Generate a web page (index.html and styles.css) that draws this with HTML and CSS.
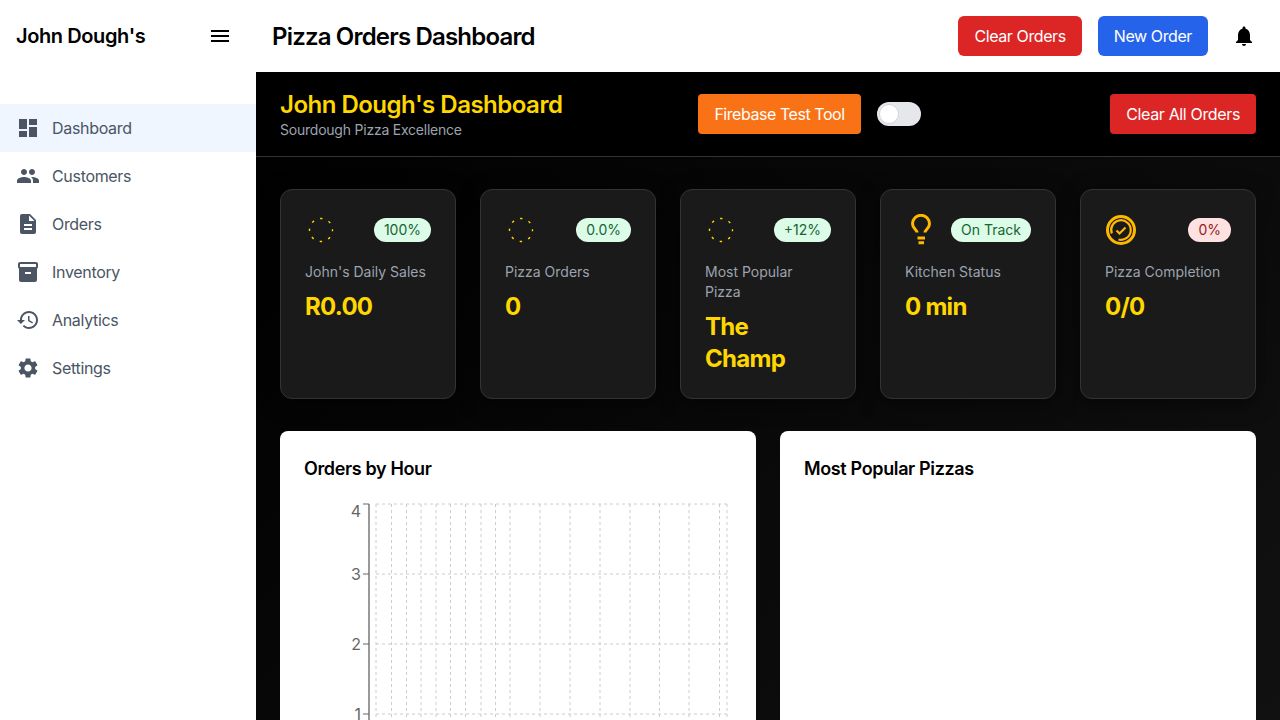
FILE: index.html
```html
<!DOCTYPE html>
<html lang="en">
<head>
    <meta charset="UTF-8">
    <meta name="viewport" content="width=device-width, initial-scale=1.0">
    <title>Pizza Orders Dashboard</title>
    <link rel="stylesheet" href="styles.css">
</head>
<body>
    <aside class="sidebar">
        <div class="brand">
            <span class="brand-name">John Dough's</span>
            <svg class="icon icon-black" viewBox="0 0 24 24"><path d="M3 18h18v-2H3v2zm0-5h18v-2H3v2zm0-7v2h18V6H3z"/></svg>
        </div>
        <nav class="nav">
            <a class="nav-item active">
                <svg class="icon" viewBox="0 0 24 24"><path d="M3 13h8V3H3v10zm0 8h8v-6H3v6zm10 0h8V11h-8v10zm0-18v6h8V3h-8z"/></svg>
                Dashboard
            </a>
            <a class="nav-item">
                <svg class="icon" viewBox="0 0 24 24"><path d="M16 11c1.66 0 2.99-1.34 2.99-3S17.66 5 16 5c-1.66 0-3 1.34-3 3s1.34 3 3 3zm-8 0c1.66 0 2.99-1.34 2.99-3S9.66 5 8 5C6.34 5 5 6.34 5 8s1.34 3 3 3zm0 2c-2.33 0-7 1.17-7 3.5V19h14v-2.5c0-2.33-4.67-3.5-7-3.5zm8 0c-.29 0-.62.02-.97.05 1.16.84 1.97 1.97 1.97 3.45V19h6v-2.5c0-2.33-4.67-3.5-7-3.5z"/></svg>
                Customers
            </a>
            <a class="nav-item">
                <svg class="icon" viewBox="0 0 24 24"><path d="M14 2H6c-1.1 0-1.99.9-1.99 2L4 20c0 1.1.89 2 1.99 2H18c1.1 0 2-.9 2-2V8l-6-6zm2 16H8v-2h8v2zm0-4H8v-2h8v2zm-3-5V3.5L18.5 9H13z"/></svg>
                Orders
            </a>
            <a class="nav-item">
                <svg class="icon" viewBox="0 0 24 24"><path d="M20 2H4c-1 0-2 .9-2 2v3.01c0 .72.43 1.34 1 1.69V20c0 1.1 1.1 2 2 2h14c.9 0 2-.9 2-2V8.7c.57-.35 1-.97 1-1.69V4c0-1.1-1-2-2-2zm-5 12H9v-2h6v2zm5-7H4V4l16-.02V7z"/></svg>
                Inventory
            </a>
            <a class="nav-item">
                <svg class="icon" viewBox="0 0 24 24"><path d="M13 3c-4.97 0-9 4.03-9 9H1l3.89 3.89.07.14L9 12H6c0-3.87 3.13-7 7-7s7 3.13 7 7-3.13 7-7 7c-1.93 0-3.68-.79-4.94-2.06l-1.42 1.42C8.27 19.99 10.51 21 13 21c4.97 0 9-4.03 9-9s-4.03-9-9-9zm-1 5v5l4.28 2.54.72-1.21-3.5-2.08V8H12z"/></svg>
                Analytics
            </a>
            <a class="nav-item">
                <svg class="icon" viewBox="0 0 24 24"><path d="M19.14 12.94c.04-.3.06-.61.06-.94 0-.32-.02-.64-.07-.94l2.03-1.58c.18-.14.23-.41.12-.61l-1.92-3.32c-.12-.22-.37-.29-.59-.22l-2.39.96c-.5-.38-1.03-.7-1.62-.94l-.36-2.54c-.04-.24-.24-.41-.48-.41h-3.84c-.24 0-.43.17-.47.41l-.36 2.54c-.59.24-1.13.57-1.62.94l-2.39-.96c-.22-.08-.47 0-.59.22L2.74 8.87c-.12.21-.08.47.12.61l2.03 1.58c-.05.3-.09.63-.09.94s.02.64.07.94l-2.03 1.58c-.18.14-.23.41-.12.61l1.92 3.32c.12.22.37.29.59.22l2.39-.96c.5.38 1.03.7 1.62.94l.36 2.54c.05.24.24.41.48.41h3.84c.24 0 .44-.17.47-.41l.36-2.54c.59-.24 1.13-.56 1.62-.94l2.39.96c.22.08.47 0 .59-.22l1.92-3.32c.12-.22.07-.47-.12-.61l-2.01-1.58zM12 15.6c-1.98 0-3.6-1.62-3.6-3.6s1.62-3.6 3.6-3.6 3.6 1.62 3.6 3.6-1.62 3.6-3.6 3.6z"/></svg>
                Settings
            </a>
        </nav>
    </aside>

    <div class="content">
        <header class="topbar">
            <h1>Pizza Orders Dashboard</h1>
            <div class="topbar-actions">
                <button class="btn btn-red">Clear Orders</button>
                <button class="btn btn-blue">New Order</button>
                <svg class="icon icon-black bell" viewBox="0 0 24 24"><path d="M12 22c1.1 0 2-.9 2-2h-4c0 1.1.89 2 2 2zm6-6v-5c0-3.07-1.64-5.64-4.5-6.32V4c0-.83-.67-1.5-1.5-1.5s-1.5.67-1.5 1.5v.68C7.63 5.36 6 7.92 6 11v5l-2 2v1h16v-1l-2-2z"/></svg>
            </div>
        </header>

        <main class="main">
            <section class="banner">
                <div>
                    <h2>John Dough's Dashboard</h2>
                    <p>Sourdough Pizza Excellence</p>
                </div>
                <div class="banner-tools">
                    <button class="btn btn-small btn-orange">Firebase Test Tool</button>
                    <span class="toggle"><span class="toggle-thumb"></span></span>
                </div>
                <button class="btn btn-small btn-red banner-clear">Clear All Orders</button>
            </section>

            <section class="stats">
                <div class="stat-card">
                    <div class="stat-head">
                        <svg class="stat-icon" viewBox="0 0 32 32"><circle class="spinner" cx="16" cy="16" r="11.5"/></svg>
                        <span class="badge">100%</span>
                    </div>
                    <div class="stat-label">John's Daily Sales</div>
                    <div class="stat-value">R0.00</div>
                </div>
                <div class="stat-card">
                    <div class="stat-head">
                        <svg class="stat-icon" viewBox="0 0 32 32"><circle class="spinner" cx="16" cy="16" r="11.5"/></svg>
                        <span class="badge">0.0%</span>
                    </div>
                    <div class="stat-label">Pizza Orders</div>
                    <div class="stat-value">0</div>
                </div>
                <div class="stat-card">
                    <div class="stat-head">
                        <svg class="stat-icon" viewBox="0 0 32 32"><circle class="spinner" cx="16" cy="16" r="11.5"/></svg>
                        <span class="badge">+12%</span>
                    </div>
                    <div class="stat-label">Most Popular Pizza</div>
                    <div class="stat-value">The Champ</div>
                </div>
                <div class="stat-card">
                    <div class="stat-head">
                        <svg class="stat-icon amber" viewBox="0 0 32 32">
                            <path d="M12 18.500c0-3-4.500-4-4.500-8.700a8.500 8.500 0 0 1 17 0c0 4.700-4.500 5.700-4.500 8.700"/>
                            <path d="M12.500 24h7.500M13.500 28.700h5.500"/>
                        </svg>
                        <span class="badge">On Track</span>
                    </div>
                    <div class="stat-label">Kitchen Status</div>
                    <div class="stat-value">0 min</div>
                </div>
                <div class="stat-card">
                    <div class="stat-head">
                        <svg class="stat-icon amber" viewBox="0 0 32 32">
                            <circle cx="16" cy="16" r="13.500"/>
                            <path class="thin" d="M6.800 19.500A9.800 9.800 0 1 1 13.500 25.500"/>
                            <path class="thin" d="M11.500 16.500l3 3L20.500 13.500"/>
                        </svg>
                        <span class="badge badge-red">0%</span>
                    </div>
                    <div class="stat-label">Pizza Completion</div>
                    <div class="stat-value">0/0</div>
                </div>
            </section>

            <section class="charts">
                <div class="chart-card">
                    <h3>Orders by Hour</h3>
                    <svg class="chart" viewBox="0 0 428 300">
                        <g class="grid">
                            <path d="M72 13H423M72 83H423M72 153H423M72 223H423"/>
                            <path d="M72 13V300M87.500 13V300M102.500 13V300M117 13V300M132 13V300M146.500 13V300M161.500 13V300M177 13V300M191.500 13V300M206 13V300M236 13V300M266 13V300M296 13V300M326 13V300M355.500 13V300M385 13V300M415.500 13V300M423 13V300"/>
                        </g>
                        <path class="axis-line" d="M65 13V300"/>
                        <path class="axis" d="M59 13H65M59 83H65M59 153H65M59 223H65"/>
                        <g class="tick">
                            <text x="57" y="26">4</text>
                            <text x="57" y="89">3</text>
                            <text x="57" y="159">2</text>
                            <text x="57" y="229">1</text>
                        </g>
                    </svg>
                </div>
                <div class="chart-card">
                    <h3>Most Popular Pizzas</h3>
                </div>
            </section>
        </main>
    </div>
</body>
</html>
```

FILE: styles.css
```css
* {
    box-sizing: border-box;
}

body {
    font-family: Inter, "Liberation Sans", sans-serif;
    margin: 0;
    display: flex;
    height: 100vh;
    overflow: hidden;
    background: #fff;
}

.icon {
    width: 24px;
    height: 24px;
    flex-shrink: 0;
    fill: #4b5563;
}

.icon-black {
    fill: #000;
}

/* sidebar */
.sidebar {
    width: 256px;
    flex-shrink: 0;
    background: #fff;
}

.brand {
    height: 72px;
    padding: 0 24px 0 16px;
    display: flex;
    align-items: center;
    justify-content: space-between;
}

.brand-name {
    font-size: 20px;
    font-weight: 600;
    letter-spacing: -0.02em;
    color: #000;
}

.nav {
    margin-top: 32px;
}

.nav-item {
    height: 48px;
    padding: 0 16px;
    display: flex;
    align-items: center;
    gap: 12px;
    font-size: 16px;
    letter-spacing: -0.02em;
    color: #4b5563;
}

.nav-item.active {
    background: #eff6ff;
}

/* top bar */
.content {
    flex: 1;
    min-width: 0;
    display: flex;
    flex-direction: column;
}

.topbar {
    height: 72px;
    flex-shrink: 0;
    padding: 0 24px 0 16px;
    display: flex;
    align-items: center;
    justify-content: space-between;
    background: #fff;
}

.topbar h1 {
    margin: 0;
    font-size: 24px;
    font-weight: 600;
    letter-spacing: -0.034em;
    color: #000;
}

.topbar-actions {
    display: flex;
    align-items: center;
    gap: 16px;
}

.bell {
    margin-left: 8px;
}

.btn {
    height: 40px;
    padding: 0 16px;
    border: none;
    border-radius: 6px;
    font-family: inherit;
    font-size: 16px;
    letter-spacing: -0.025em;
    color: #fff;
    cursor: pointer;
}

.btn-small {
    border-radius: 4px;
    letter-spacing: -0.028em;
}

.btn-red {
    background: #dc2626;
}

.btn-blue {
    background: #2563eb;
}

.btn-orange {
    background: #f97316;
}

/* dark area */
.main {
    flex: 1;
    min-height: 0;
    overflow: hidden;
    background: linear-gradient(135deg, #000, #111);
}

.banner {
    height: 85px;
    padding: 0 24px;
    display: flex;
    align-items: center;
    background: #000;
    border-bottom: 1px solid #333;
}

.banner h2 {
    margin: 0 0 -2px;
    font-size: 24px;
    line-height: 34px;
    font-weight: 600;
    letter-spacing: -0.021em;
    color: #ffd700;
}

.banner p {
    margin: 0;
    font-size: 14px;
    line-height: 20px;
    letter-spacing: -0.016em;
    color: #9ca3af;
}

.banner-tools {
    margin-left: 136px;
    display: flex;
    align-items: center;
    gap: 16px;
}

.banner-clear {
    margin-left: auto;
    letter-spacing: -0.022em;
}

.toggle {
    width: 44px;
    height: 24px;
    padding: 2px;
    border-radius: 12px;
    background: #e5e7eb;
}

.toggle-thumb {
    display: block;
    width: 20px;
    height: 20px;
    border-radius: 50%;
    background: #fff;
    border: 1px solid #d1d5db;
}

/* stat cards */
.stats {
    margin-top: 32px;
    padding: 0 24px;
    display: grid;
    grid-template-columns: repeat(5, 1fr);
    gap: 24px;
}

.stat-card {
    height: 210px;
    padding: 24px;
    background: #1a1a1a;
    border: 1px solid #333;
    border-radius: 12px;
    box-shadow: 0 4px 20px rgba(0, 0, 0, 0.5);
}

.stat-head {
    display: flex;
    align-items: center;
    justify-content: space-between;
    margin-bottom: 16px;
}

.stat-icon {
    width: 32px;
    height: 32px;
    flex-shrink: 0;
    fill: none;
}

.spinner {
    stroke: #ffd700;
    stroke-width: 1.4;
    stroke-dasharray: 2.5 6.53;
    stroke-dashoffset: 1.25;
}

.amber {
    stroke: #ffb800;
    stroke-width: 3;
}

.amber .thin {
    stroke-width: 2.2;
}

.badge {
    height: 24px;
    padding: 0 10px;
    border-radius: 12px;
    background: #dcfce7;
    color: #166534;
    font-size: 14px;
    line-height: 24px;
    white-space: nowrap;
}

.badge-red {
    background: #fee2e2;
    color: #991b1b;
}

.stat-label {
    font-size: 14px;
    line-height: 20px;
    color: #9ca3af;
    margin-bottom: 9px;
}

.stat-value {
    font-size: 24px;
    line-height: 32px;
    font-weight: 700;
    letter-spacing: -0.03em;
    color: #ffd700;
}

/* charts */
.charts {
    margin-top: 32px;
    padding: 0 24px;
    display: grid;
    grid-template-columns: 1fr 1fr;
    gap: 24px;
}

.chart-card {
    height: 400px;
    padding: 24px;
    background: #fff;
    border-radius: 8px;
}

.chart-card h3 {
    margin: 0 0 8px;
    font-size: 18px;
    line-height: 28px;
    font-weight: 600;
    letter-spacing: -0.02em;
    color: #000;
}

.chart {
    display: block;
    width: 428px;
    height: 300px;
}

.grid path {
    fill: none;
    stroke: #ccc;
    stroke-dasharray: 3 3;
}

.axis-line {
    fill: none;
    stroke: #999;
    stroke-width: 2;
}

.axis {
    fill: none;
    stroke: #666;
}

.tick text {
    font-size: 16px;
    fill: #666;
    text-anchor: end;
}
```
